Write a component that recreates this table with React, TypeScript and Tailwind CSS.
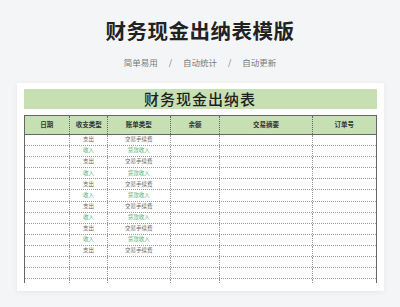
import React from "react";

type Row = {
  kind: string;
  bill: string;
  income: boolean;
};

const columns = [
  { name: "日期", width: "w-[46px]" },
  { name: "收支类型", width: "w-[38px]" },
  { name: "账单类型", width: "w-[63px]" },
  { name: "余额", width: "w-[50px]" },
  { name: "交易摘要", width: "w-[93px]" },
  { name: "订单号", width: "w-[63px]" },
];

const rows: Row[] = [];
for (let i = 0; i < 11; i++) {
  rows.push(
    i % 2 === 0
      ? { kind: "支出", bill: "交易手续费", income: false }
      : { kind: "收入", bill: "货款收入", income: true }
  );
}
for (let i = 0; i < 3; i++) rows.push({ kind: "", bill: "", income: false });

const App: React.FC = () => {
  return (
    <div
      className="w-[400px] h-[307px] bg-[#f4f5f7] overflow-hidden flex flex-col items-center"
      style={{ fontFamily: '"Noto Sans CJK SC", "Noto Sans", sans-serif' }}
    >
      <div className="pt-[16px] h-[44px] text-[20.5px] leading-[28px] font-bold text-[#222] tracking-[0.5px]">
        财务现金出纳表模版
      </div>
      <div className="mt-[12px] h-[12px] flex items-center text-[8.5px] leading-[12px] text-[#7a7a7a] gap-[11px]">
        <span>简单易用</span>
        <span>/</span>
        <span>自动统计</span>
        <span>/</span>
        <span>自动更新</span>
      </div>

      <div className="mt-[15px] w-[367px] bg-white shadow-[0_1px_6px_rgba(0,0,0,0.06)] pt-[6px] pb-[8px] px-[7px] flex flex-col">
        <div className="h-[20px] bg-[#c6e0b4] flex items-center justify-center text-[15px] font-medium text-[#1f1f1f] tracking-[1px]">
          财务现金出纳表
        </div>

        <div className="mt-[6px] h-[168px] overflow-hidden border-l border-r border-t border-[#666]">
          <div className="flex h-[19px] bg-[#c6e0b4] border-b border-[#666]">
            {columns.map((c, i) => (
              <div
                key={c.name}
                className={`${c.width} flex items-center justify-center text-[6.5px] font-bold text-[#333] ${
                  i < columns.length - 1 ? "border-r border-dotted border-[#666]" : ""
                }`}
              >
                {c.name}
              </div>
            ))}
          </div>
          {rows.map((r, ri) => (
            <div key={ri} className="flex h-[11.1px] border-b border-dotted border-[#999]">
              {columns.map((c, i) => (
                <div
                  key={c.name}
                  className={`${c.width} flex items-center justify-center text-[5.5px] leading-none ${
                    r.income ? "text-[#4cae78]" : "text-[#666]"
                  } ${i < columns.length - 1 ? "border-r border-dotted border-[#999]" : ""}`}
                >
                  {i === 1 ? r.kind : i === 2 ? r.bill : ""}
                </div>
              ))}
            </div>
          ))}
        </div>
      </div>
    </div>
  );
};

export default App;
